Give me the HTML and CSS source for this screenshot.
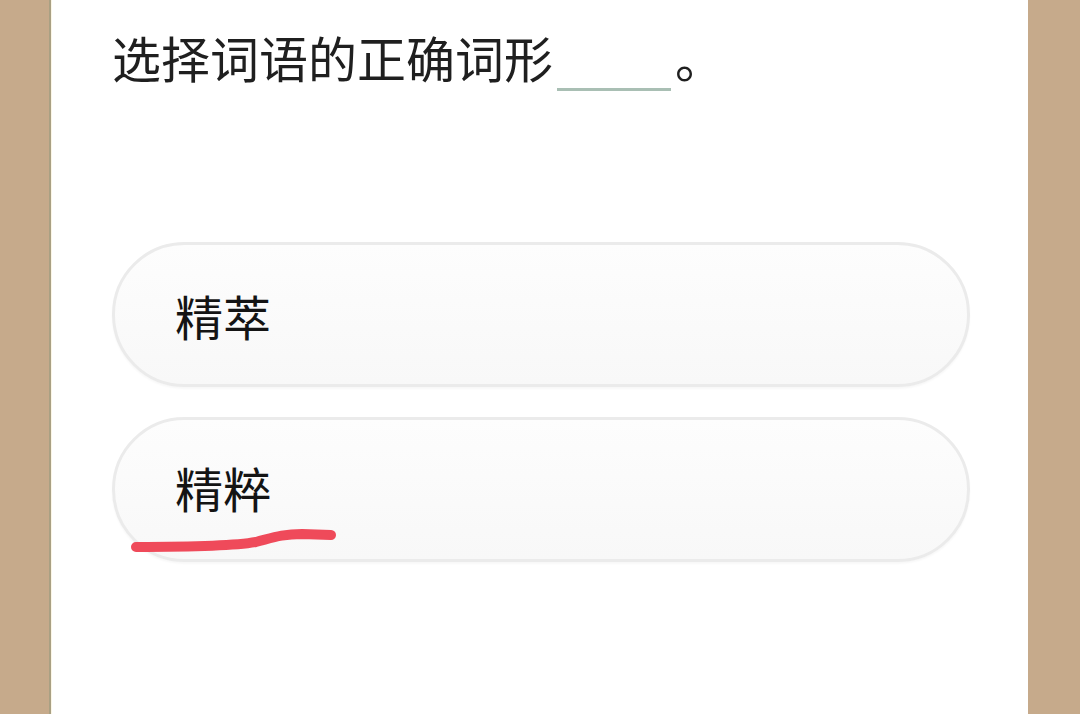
FILE: index.html
```html
<!DOCTYPE html>
<html lang="zh-CN">
<head>
<meta charset="utf-8">
<title>选择词语的正确词形</title>
<link rel="stylesheet" href="styles.css">
</head>
<body>
<main class="card">
  <h1 class="question">选择词语的正确词形<span class="blank"></span>。</h1>
  <div class="options">
    <div class="option">精萃</div>
    <div class="option option-marked">精粹</div>
  </div>
  <svg class="mark" width="215" height="30" viewBox="0 0 215 30" aria-hidden="true">
    <path d="M6 22 C 60 22, 105 21, 126 17 C 142 13, 152 9, 172 9 L 201 10" fill="none" stroke="#ef4a5a" stroke-width="10" stroke-linecap="round" stroke-linejoin="round"/>
  </svg>
</main>
</body>
</html>
```
FILE: styles.css
```css
html, body {
  margin: 0;
  padding: 0;
  height: 100%;
}
body {
  background: #c6aa8b;
  font-family: "Noto Sans CJK SC", "Noto Sans", sans-serif;
  color: #1c1c1c;
  overflow: hidden;
}
.card {
  position: relative;
  box-sizing: border-box;
  margin-left: 52px;
  width: 976px;
  height: 714px;
  background: #ffffff;
  padding: 21px 58px 0 60px;
  box-shadow: -1px 0 0 #fbf6e6, -3px 0 0 #a9a083;
}
.question {
  margin: 0;
  font-size: 49px;
  font-weight: 400;
  line-height: 71px;
  color: #1f1f1f;
}
.blank {
  display: inline-block;
  width: 114px;
  height: 3px;
  margin: 0 4px 0 4px;
  background: #a9bfb4;
  vertical-align: -13px;
}
.options {
  display: flex;
  flex-direction: column;
  gap: 30px;
  margin-top: 150px;
}
.option {
  box-sizing: border-box;
  height: 145px;
  border: 3px solid #ebebeb;
  border-radius: 73px;
  background: linear-gradient(#fdfdfd, #f8f8f8);
  box-shadow: 0 2px 2px rgba(0, 0, 0, 0.03);
  display: flex;
  align-items: center;
  padding-left: 60px;
  font-size: 48px;
  color: #141414;
}
.option-marked {
  padding-bottom: 6px;
}
.mark {
  position: absolute;
  left: 78px;
  top: 525px;
}
```
